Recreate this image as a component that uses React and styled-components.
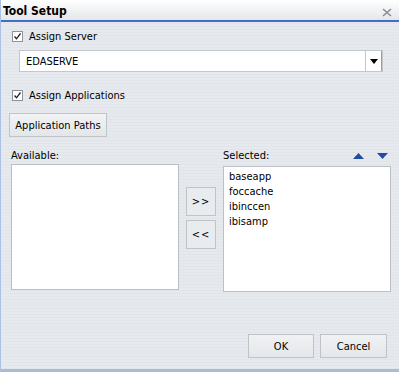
import React from 'react'
import styled, { createGlobalStyle } from 'styled-components'

const GlobalStyle = createGlobalStyle`
  html, body {
    margin: 0;
    padding: 0;
    background: #e5e8ec;
  }
  body {
    font-family: Tahoma, "DejaVu Sans Condensed", "DejaVu Sans", sans-serif;
    font-size: 11px;
    color: #000;
  }
`

const selectedApps = ['baseapp', 'foccache', 'ibinccen', 'ibisamp']

function Check({ label }) {
  return (
    <CheckRow>
      <Box>
        <svg width="9" height="9" viewBox="0 0 9 9">
          <path d="M1.5 4.5 L3.5 6.8 L7.5 1.5" fill="none" stroke="#222" strokeWidth="1.3" />
        </svg>
      </Box>
      <span>{label}</span>
    </CheckRow>
  )
}

export default function App() {
  return (
    <>
      <GlobalStyle />
      <Dialog>
        <TitleBar>
          <Title>Tool Setup</Title>
          <Close>
            <svg width="10" height="9" viewBox="0 0 10 9">
              <path d="M1 1 L9 8 M9 1 L1 8" stroke="#8a8e92" strokeWidth="1.6" />
            </svg>
          </Close>
        </TitleBar>
        <Body>
          <Check label="Assign Server" />
          <Select>
            <SelectValue>EDASERVE</SelectValue>
            <DropButton>
              <svg width="8" height="5" viewBox="0 0 8 5">
                <path d="M0 0 H8 L4 5 Z" fill="#000" />
              </svg>
            </DropButton>
          </Select>
          <Spacer h={17} />
          <Check label="Assign Applications" />
          <PathsButton>Application Paths</PathsButton>
          <Lists>
            <Column>
              <LabelRow>Available:</LabelRow>
              <ListBox h={126} />
            </Column>
            <Mover>
              <SmallButton>&gt;&gt;</SmallButton>
              <SmallButton>&lt;&lt;</SmallButton>
            </Mover>
            <Column>
              <LabelRow>
                <span>Selected:</span>
                <Arrows>
                  <svg width="11" height="6" viewBox="0 0 11 6">
                    <path d="M0 6 L5.5 0 L11 6 Z" fill="#1f4f9e" />
                  </svg>
                  <svg width="11" height="6" viewBox="0 0 11 6">
                    <path d="M0 0 H11 L5.5 6 Z" fill="#1f4f9e" />
                  </svg>
                </Arrows>
              </LabelRow>
              <ListBox h={126} top={3}>
                {selectedApps.map(app => (
                  <Item key={app}>{app}</Item>
                ))}
              </ListBox>
            </Column>
          </Lists>
          <Footer>
            <DialogButton w={66}>OK</DialogButton>
            <DialogButton w={67}>Cancel</DialogButton>
          </Footer>
        </Body>
      </Dialog>
    </>
  )
}

const Dialog = styled.div`
  width: 399px;
  height: 372px;
  box-sizing: border-box;
  display: flex;
  flex-direction: column;
  border-left: 1px solid #a9c1e2;
  border-bottom: 3px solid #a8bcd2;
  background: repeating-linear-gradient(
    to bottom,
    #e6e9ed 0px,
    #e6e9ed 2px,
    #e1e5e9 2px,
    #e1e5e9 3px
  );
`

const TitleBar = styled.div`
  height: 20px;
  flex: none;
  display: flex;
  align-items: center;
  justify-content: space-between;
  padding: 0 7px 0 2px;
  background: linear-gradient(to bottom, #ffffff 0%, #f4f5f6 40%, #e4e6e8 100%);
  border-bottom: 2px solid #3f6fc9;
`

const Title = styled.div`
  font-weight: bold;
  font-size: 12px;
  padding-top: 1px;
`

const Close = styled.div`
  display: flex;
  align-items: center;
  padding-top: 4px;
`

const Body = styled.div`
  flex: 1;
  display: flex;
  flex-direction: column;
  padding: 8px 0 0 0;
`

const CheckRow = styled.div`
  display: flex;
  align-items: center;
  gap: 6px;
  margin-left: 11px;
  height: 12px;
`

const Box = styled.span`
  width: 11px;
  height: 11px;
  box-sizing: border-box;
  border: 1px solid #8f9296;
  background: #fff;
  display: flex;
  align-items: center;
  justify-content: center;
`

const Select = styled.div`
  margin: 8px 0 0 18px;
  width: 364px;
  height: 22px;
  box-sizing: border-box;
  border: 1px solid #c3c6ca;
  background: #fff;
  display: flex;
  align-items: stretch;
`

const SelectValue = styled.div`
  flex: 1;
  display: flex;
  align-items: center;
  padding-left: 6px;
`

const DropButton = styled.div`
  width: 15px;
  border-left: 1px solid #c3c6ca;
  border-right: 1px solid #9a9da1;
  display: flex;
  align-items: center;
  justify-content: center;
  padding-top: 1px;
`

const Spacer = styled.div`
  height: ${p => p.h}px;
  flex: none;
`

const PathsButton = styled.div`
  margin: 12px 0 0 8px;
  width: 98px;
  height: 24px;
  box-sizing: border-box;
  border: 1px solid #c0c3c7;
  background: linear-gradient(to bottom, #f1f3f5, #e3e6ea);
  display: flex;
  align-items: center;
  justify-content: center;
`

const Lists = styled.div`
  display: grid;
  grid-template-columns: 168px 30px 168px;
  column-gap: 7px;
  padding-left: 10px;
  margin-top: 11px;
`

const Column = styled.div`
  display: flex;
  flex-direction: column;
`

const LabelRow = styled.div`
  height: 15px;
  display: flex;
  align-items: center;
  justify-content: space-between;
`

const Arrows = styled.div`
  display: flex;
  gap: 13px;
  padding-right: 3px;
`

const ListBox = styled.div`
  margin-top: ${p => p.top || 1}px;
  height: ${p => p.h}px;
  box-sizing: border-box;
  border: 1px solid #bcc0c4;
  background: #fff;
  padding: 2px 0 0 5px;
`

const Item = styled.div`
  line-height: 15px;
`

const Mover = styled.div`
  display: flex;
  flex-direction: column;
  gap: 4px;
  padding-top: 39px;
`

const SmallButton = styled.div`
  width: 30px;
  height: 29px;
  box-sizing: border-box;
  border: 1px solid #c0c3c7;
  background: #e9ecef;
  display: flex;
  align-items: center;
  justify-content: center;
  letter-spacing: 1px;
`

const Footer = styled.div`
  margin-top: auto;
  display: flex;
  justify-content: flex-end;
  gap: 6px;
  padding: 0 12px 11px 0;
`

const DialogButton = styled.div`
  width: ${p => p.w}px;
  height: 24px;
  box-sizing: border-box;
  border: 1px solid #bfc2c6;
  background: linear-gradient(to bottom, #eff1f3, #e4e7ea);
  display: flex;
  align-items: center;
  justify-content: center;
`
